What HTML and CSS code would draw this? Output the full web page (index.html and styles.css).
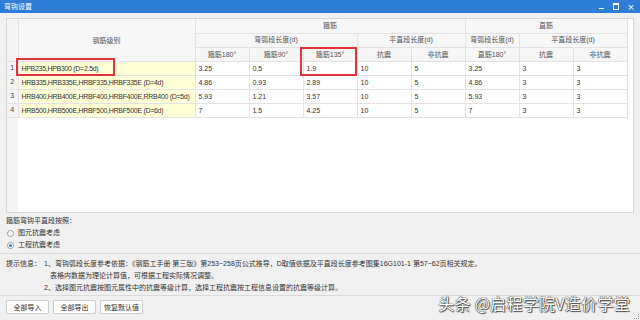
FILE: index.html
```html
<!DOCTYPE html>
<html lang="zh">
<head>
<meta charset="utf-8">
<title>弯钩设置</title>
<link rel="stylesheet" href="styles.css">
</head>
<body>
<div class="window">
  <div class="titlebar">
    <span class="title">弯钩设置</span>
    <div class="controls">
      <span class="ctl min"></span>
      <span class="ctl max"></span>
      <span class="ctl close">×</span>
    </div>
  </div>
  <div class="content">
    <div class="panel">
      <table class="grid">
        <colgroup>
          <col class="c-num"><col class="c-name">
          <col class="c-val"><col class="c-val"><col class="c-val"><col class="c-val">
          <col class="c-val"><col class="c-val"><col class="c-val"><col class="c-val">
        </colgroup>
        <thead>
          <tr class="h1">
            <th class="num" rowspan="3"></th>
            <th class="name" rowspan="3">钢筋级别</th>
            <th colspan="5">箍筋</th>
            <th colspan="3">直筋</th>
          </tr>
          <tr class="h2">
            <th colspan="3">弯弧段长度(d)</th>
            <th colspan="2">平直段长度(d)</th>
            <th>弯弧段长度(d)</th>
            <th colspan="2">平直段长度(d)</th>
          </tr>
          <tr class="h3">
            <th>箍筋180°</th><th>箍筋90°</th><th>箍筋135°</th><th>抗震</th><th>非抗震</th>
            <th>直筋180°</th><th>抗震</th><th>非抗震</th>
          </tr>
        </thead>
        <tbody>
          <tr><td class="num">1</td><td class="name">HPB235,HPB300 (D=2.5d)</td><td>3.25</td><td>0.5</td><td>1.9</td><td>10</td><td>5</td><td>3.25</td><td>3</td><td>3</td></tr>
          <tr><td class="num">2</td><td class="name">HRB335,HRB335E,HRBF335,HRBF335E (D=4d)</td><td>4.86</td><td>0.93</td><td>2.89</td><td>10</td><td>5</td><td>4.86</td><td>3</td><td>3</td></tr>
          <tr><td class="num">3</td><td class="name">HRB400,HRB400E,HRBF400,HRBF400E,RRB400 (D=5d)</td><td>5.93</td><td>1.21</td><td>3.57</td><td>10</td><td>5</td><td>5.93</td><td>3</td><td>3</td></tr>
          <tr><td class="num">4</td><td class="name">HRB500,HRB500E,HRBF500,HRBF500E (D=6d)</td><td>7</td><td>1.5</td><td>4.25</td><td>10</td><td>5</td><td>7</td><td>3</td><td>3</td></tr>
        </tbody>
      </table>
      <div class="mark mark-a"></div>
      <div class="mark mark-b"></div>
    </div>
    <div class="options">
      <div class="line">箍筋弯钩平直段按照：</div>
      <label class="line radio"><span class="dot"></span>图元抗震考虑</label>
      <label class="line radio"><span class="dot on"></span>工程抗震考虑</label>
    </div>
    <div class="tips">
      <div class="tip-label">提示信息：</div>
      <div class="tip-body">
        <div class="line">1、弯钩弧段长度参考依据：《钢筋工手册 第三版》第253~258页公式推导，D取值依据及平直段长度参考图集16G101-1 第57~62页相关规定。</div>
        <div class="line indent">表格内数据为理论计算值，可根据工程实际情况调整。</div>
        <div class="line">2、选择图元抗震按图元属性中的抗震等级计算，选择工程抗震按工程信息设置的抗震等级计算。</div>
      </div>
    </div>
    <div class="buttons">
      <button class="btn">全部导入</button>
      <button class="btn">全部导出</button>
      <button class="btn">恢复默认值</button>
    </div>
  </div>
  <div class="watermark">头条 @启程学院V造价学堂</div>
  <div class="grip"></div>
</div>
</body>
</html>
```
FILE: styles.css
```css
* { box-sizing: border-box; }
html, body { margin: 0; padding: 0; }
body {
  width: 640px;
  height: 320px;
  overflow: hidden;
  background: #f0f0f0;
  font-family: "Liberation Sans", "Noto Sans CJK SC", sans-serif;
  font-size: 7px;
  color: #333;
}
.window { position: relative; width: 640px; height: 320px; }
.titlebar {
  height: 13px;
  background: #2f7dd6;
  display: flex;
  align-items: center;
  justify-content: space-between;
  padding: 0 4px;
  color: #fff;
}
.title { font-size: 7px; line-height: 13px; }
.controls { display: flex; gap: 9px; align-items: center; padding-right: 2px; }
.ctl { width: 6px; height: 6px; position: relative; display: flex; align-items: center; justify-content: center; }
.ctl.min::after { content: ""; width: 5px; height: 1px; background: #fff; margin-top: 3px; }
.ctl.max::after { content: ""; width: 5px; height: 4px; border: 1px solid #fff; border-top-width: 2px; }
.ctl.close { font-size: 9px; line-height: 6px; font-family: "DejaVu Sans", sans-serif; }

.content { padding: 5px 6px 0 6px; }
.panel {
  position: relative;
  height: 195px;
  border: 1px solid #d6d6d6;
  background: linear-gradient(to right, #f4f4f4 11px, #fff 11px);
}
.grid {
  border-collapse: collapse;
  table-layout: fixed;
  width: 620px;
}
.c-num { width: 11px; }
.c-name { width: 177px; }
.c-val { width: 54px; }
.grid th, .grid td {
  border: 1px solid #e3e3e3;
  padding: 0 3px;
  white-space: nowrap;
  overflow: hidden;
  font-weight: normal;
  line-height: 12px;
}
.grid th {
  background: #f6f6f6;
  color: #555;
  text-align: center;
}
.grid thead tr { height: 14px; }
.grid thead tr.h3 { height: 13px; }
.grid thead tr.h3 th { padding-top: 1px; }
.grid tbody tr { height: 14px; }
.grid td { text-align: left; background: #fff; color: #333; padding-top: 1px; }
.grid th.num, .grid td.num {
  background: #f4f4f4;
  padding: 0;
  text-align: center;
  color: #444;
  border-left: none;
}
.grid th.name { padding-top: 3px; }
.grid td.name { background: #ffffd6; letter-spacing: -0.3px; }
.grid thead tr.h1 th { border-top: none; }

.mark { position: absolute; border: 2px solid #e0343a; }
.mark-a { left: 9px; top: 39px; width: 99px; height: 18px; }
.mark-b { left: 293px; top: 28px; width: 57px; height: 29px; }

.options { padding-top: 2px; }
.line { height: 12px; line-height: 12px; white-space: nowrap; display: flex; align-items: center; }
.radio { padding-left: 1px; gap: 4px; }
.dot {
  width: 7px; height: 7px;
  border-radius: 50%;
  border: 1px solid #9a9a9a;
  background: #fff;
  display: flex; align-items: center; justify-content: center;
}
.dot.on::after { content: ""; width: 3px; height: 3px; border-radius: 50%; background: #2f7dd6; }

.tips {
  margin: 2px -6px 0;
  padding: 4px 6px 2px;
  border-top: 1px solid #dadada;
  border-bottom: 1px solid #dadada;
  display: flex;
  height: 43px;
}
.tip-label { width: 38px; height: 12px; line-height: 12px; }
.tip-body { display: flex; flex-direction: column; }
.indent { padding-left: 6px; }

.buttons { display: flex; gap: 4px; padding-top: 4px; }
.btn {
  font-family: inherit;
  font-size: 7px;
  color: #333;
  width: 43px;
  height: 14px;
  padding: 0;
  background: #fbfbfb;
  border: 1px solid #cfcfcf;
  border-radius: 1px;
}

.watermark {
  position: absolute;
  right: 10px;
  bottom: 8px;
  font-family: "Noto Sans CJK SC", sans-serif;
  font-size: 16px;
  line-height: 18px;
  color: #fff;
  letter-spacing: 0.3px;
  text-shadow: 0 0 1px #333, 0 0 1px #333, 1px 1px 1px #555;
}
.grip {
  position: absolute; right: 1px; bottom: 1px; width: 5px; height: 5px;
  border-right: 1px dotted #999; border-bottom: 1px dotted #999;
}
```
